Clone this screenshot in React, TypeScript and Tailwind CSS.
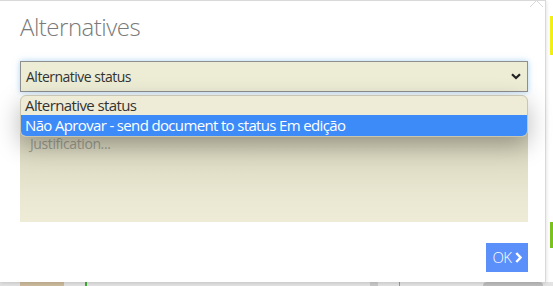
export default function App() {
  return (
    <div className="relative h-[286px] w-[553px] overflow-hidden bg-white font-['Open_Sans',sans-serif]">
      {/* page behind the dialog */}
      <div className="absolute right-0 top-0 flex h-full w-[3px] flex-col">
        <div className="mt-[16px] h-[39px] bg-[#f2ef12]" />
        <div className="mt-[167px] h-[26px] bg-[#7cc21e]" />
      </div>
      <div className="absolute bottom-0 left-0 flex h-[4px] w-full items-stretch bg-[#e3e3e3]">
        <div className="ml-[20px] w-[44px] bg-[#cdbb9c]" />
        <div className="ml-[21px] w-[2px] bg-[#3fae3a]" />
        <div className="ml-[283px] w-[8px] bg-[#c9c9c9]" />
        <div className="ml-[21px] w-px bg-[#9a9a9a]" />
        <div className="ml-[83px] w-[60px] rounded-t bg-[#bdbdbd]" />
      </div>

      {/* dialog */}
      <div className="absolute left-0 top-0 h-[282px] w-[546px] border-r border-t border-[#d9d9d9] bg-white shadow-[0_1px_4px_rgba(0,0,0,0.15)]">
        <svg className="absolute -top-px left-[530px]" width="13" height="8" viewBox="0 0 13 8">
          <path d="M0 7 L6.5 0.5 L13 7" fill="white" stroke="#d9d9d9" strokeWidth="1" />
        </svg>
        <div className="flex flex-col px-[20px] pr-[17px] pt-[10px]">
          <h2 className="text-[24px] font-light leading-[32px] tracking-[-0.5px] text-[#7a7a7a]">Alternatives</h2>

          <div className="mt-[18px] flex h-[31px] items-center justify-between border border-[#8f8f8f] bg-[#edecd5] pl-[5px] pr-[6px] shadow-[0_0_6px_rgba(102,175,233,0.55)]">
            <span className="text-[14px] tracking-[-0.5px] text-[#333]">Alternative status</span>
            <svg width="10" height="7" viewBox="0 0 10 7">
              <path d="M1 1.2 L5 5 L9 1.2" fill="none" stroke="#222" strokeWidth="2.2" />
            </svg>
          </div>

          <div className="mt-[34px] h-[96px] bg-[linear-gradient(to_bottom,#cbc9b1_0%,#dddbc3_35%,#e9e7d1_70%,#eeecd6_100%)] pl-[10px] pt-[5px]">
            <span className="text-[14px] tracking-[-0.4px] text-[#9a9a90]">Justification...</span>
          </div>

          <div className="mt-[21px] flex justify-end">
            <button className="flex h-[29px] w-[42px] items-center justify-center gap-[3px] bg-[#5b8ff9] text-[15px] font-light text-white">
              <span className="tracking-[-0.5px]">OK</span>
              <svg width="7" height="11" viewBox="0 0 7 11">
                <path d="M1.3 1 L5.5 5.5 L1.3 10" fill="none" stroke="white" strokeWidth="2.4" />
              </svg>
            </button>
          </div>
        </div>

        {/* open native option list */}
        <div className="absolute left-[20px] top-[94px] w-[508px] overflow-hidden rounded-[6px] border border-[#c8c6b0] bg-[#eeecd6] text-[15px] leading-[19px] shadow-[0_8px_24px_rgba(0,0,0,0.28)]">
          <div className="h-[19px] pl-[4px] tracking-[-0.6px] text-[#333]">Alternative status</div>
          <div className="h-[21px] bg-[#3d8bf8] pl-[4px] leading-[21px] tracking-[-0.65px] text-white">
            Não Aprovar - send document to status Em edição
          </div>
        </div>
      </div>
    </div>
  );
}
